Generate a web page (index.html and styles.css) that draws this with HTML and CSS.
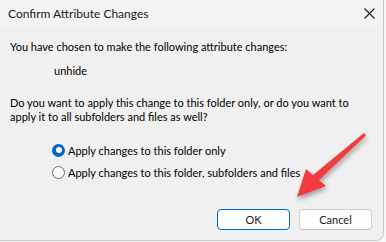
FILE: index.html
```html
<!DOCTYPE html>
<html>
<head>
<meta charset="utf-8">
<link rel="stylesheet" href="styles.css">
</head>
<body>
<div class="window">
  <div class="titlebar">
    <span class="title">Confirm Attribute Changes</span>
    <svg class="close" width="11" height="11" viewBox="0 0 11 11"><path d="M0.5 0.5L10.5 10.5M10.5 0.5L0.5 10.5" stroke="#1a1a1a" stroke-width="1.1"/></svg>
  </div>
  <div class="content">
    <p class="line">You have chosen to make the following attribute changes:</p>
    <p class="attr">unhide</p>
    <p class="question">Do you want to apply this change to this folder only, or do you want to apply it to all subfolders and files as well?</p>
    <div class="options">
      <label class="option"><span class="radio checked"></span>Apply changes to this folder only</label>
      <label class="option"><span class="radio"></span>Apply changes to this folder, subfolders and files</label>
    </div>
    <div class="buttons">
      <button class="btn primary">OK</button>
      <button class="btn">Cancel</button>
    </div>
  </div>
  <svg class="arrow" width="386" height="242" viewBox="0 0 386 242">
    <defs>
      <filter id="sh" x="-20%" y="-20%" width="140%" height="140%">
        <feDropShadow dx="1" dy="3" stdDeviation="2.5" flood-color="#000" flood-opacity="0.35"/>
      </filter>
    </defs>
    <g filter="url(#sh)" fill="#f23a3f">
      <polygon points="364,133 366,135.5 318,181 313,175"/>
      <polygon points="306,169 297,197 326,186"/>
    </g>
  </svg>
</div>
</body>
</html>
```
FILE: styles.css
```css
html, body {
  margin: 0;
  padding: 0;
}
body {
  background: #f7f7f7;
  width: 386px;
  height: 242px;
  overflow: hidden;
  font-family: "Segoe UI", Lato, "Noto Sans", sans-serif;
  font-size: 12px;
  color: #000;
}
.window {
  position: relative;
  width: 383px;
  height: 240px;
  background: #f0f0f0;
  border-right: 1px solid #c9c9c9;
  border-bottom: 1px solid #c9c9c9;
  border-bottom-right-radius: 8px;
  overflow: hidden;
}
.titlebar {
  height: 26px;
  background: #f3f3f3;
  display: flex;
  align-items: center;
  justify-content: space-between;
  padding: 0 8px 0 8px;
  box-sizing: border-box;
}
.title {
  font-size: 12px;
  color: #1a1a1a;
}
.content {
  padding: 13px 11px 0 10px;
  font-size: 11px;
}
.content p {
  margin: 0;
  line-height: 16px;
}
.attr {
  margin-top: 8px !important;
  padding-left: 44px;
}
.question {
  margin-top: 17px !important;
  line-height: 14px !important;
}
.options {
  margin-top: 18px;
  padding-left: 42px;
  display: flex;
  flex-direction: column;
  gap: 6px;
}
.option {
  display: flex;
  align-items: center;
  height: 16px;
  gap: 3px;
}
.radio {
  width: 11px;
  height: 11px;
  border: 1px solid #6a6a6a;
  border-radius: 50%;
  background: #fafafa;
  box-sizing: content-box;
  position: relative;
}
.radio.checked {
  width: 13px;
  height: 13px;
  border: none;
  background: #0067c0;
}
.radio.checked::after {
  content: "";
  position: absolute;
  left: 3.5px;
  top: 3.5px;
  width: 6px;
  height: 6px;
  border-radius: 50%;
  background: #fff;
}
.buttons {
  display: flex;
  justify-content: flex-end;
  gap: 9px;
  margin-top: 29px;
}
.btn {
  width: 73px;
  height: 21px;
  font-family: inherit;
  font-size: 11px;
  background: #fdfdfd;
  border: 1px solid #d0d0d0;
  border-bottom-color: #bcbcbc;
  border-radius: 4px;
  padding: 0;
  color: #1a1a1a;
}
.btn.primary {
  border: 1px solid #0067c0;
  box-shadow: inset 0 0 0 1px #fff;
}
.arrow {
  position: absolute;
  left: 0;
  top: 0;
  pointer-events: none;
}
```
